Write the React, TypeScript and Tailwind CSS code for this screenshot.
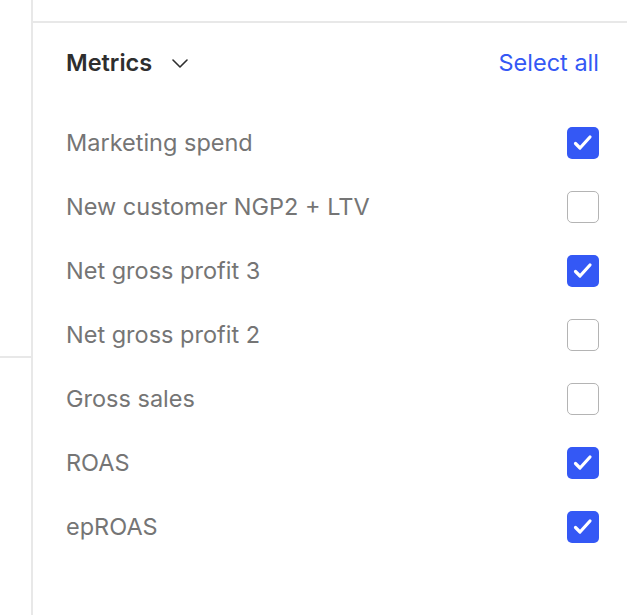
import { useState } from "react";

const metrics = [
  { label: "Marketing spend", checked: true },
  { label: "New customer NGP2 + LTV", checked: false },
  { label: "Net gross profit 3", checked: true },
  { label: "Net gross profit 2", checked: false },
  { label: "Gross sales", checked: false },
  { label: "ROAS", checked: true },
  { label: "epROAS", checked: true },
];

function Checkbox({ checked, onClick }: { checked: boolean; onClick: () => void }) {
  return (
    <button
      onClick={onClick}
      className={
        checked
          ? "flex h-[32px] w-[32px] items-center justify-center rounded-[5px] bg-[#3458f5]"
          : "h-[32px] w-[32px] rounded-[5px] border-[1.5px] border-[#b4b4b4] bg-white"
      }
    >
      {checked && (
        <svg width="32" height="32" viewBox="0 0 32 32" fill="none">
          <path
            d="M8.5 16.5L13 21L23 10"
            stroke="white"
            strokeWidth="3.2"
            strokeLinecap="round"
            strokeLinejoin="round"
          />
        </svg>
      )}
    </button>
  );
}

export default function App() {
  const [items, setItems] = useState(metrics);

  const toggle = (i: number) =>
    setItems((prev) => prev.map((m, idx) => (idx === i ? { ...m, checked: !m.checked } : m)));

  return (
    <div className="flex h-[615px] w-[627px] bg-white font-['Inter',sans-serif]">
      <div className="w-[33px] shrink-0 border-r-2 border-[#e8e8e8]">
        <div className="h-[358px] border-b-2 border-[#e8e8e8]" />
      </div>
      <div className="flex-1">
        <div className="h-[23px] border-b-2 border-[#e8e8e8]" />
        <div className="flex h-[80px] items-center justify-between pl-[33px] pr-[28px]">
          <div className="flex items-center gap-[20px]">
            <span className="text-[23.5px] font-semibold text-[#2e2e2e]">Metrics</span>
            <svg width="16" height="9" viewBox="0 0 16 9" fill="none">
              <path d="M1 1L8 8L15 1" stroke="#2e2e2e" strokeWidth="1.6" strokeLinecap="round" strokeLinejoin="round" />
            </svg>
          </div>
          <button
            onClick={() => setItems((prev) => prev.map((m) => ({ ...m, checked: true })))}
            className="text-[23.5px] text-[#3458f5]"
          >
            Select all
          </button>
        </div>
        <div className="pt-[8px]">
          {items.map((m, i) => (
            <div key={m.label} className="flex h-[64px] items-center justify-between pl-[33px] pr-[28px]">
              <span className="text-[23.5px] text-[#757575]">{m.label}</span>
              <Checkbox checked={m.checked} onClick={() => toggle(i)} />
            </div>
          ))}
        </div>
      </div>
    </div>
  );
}
